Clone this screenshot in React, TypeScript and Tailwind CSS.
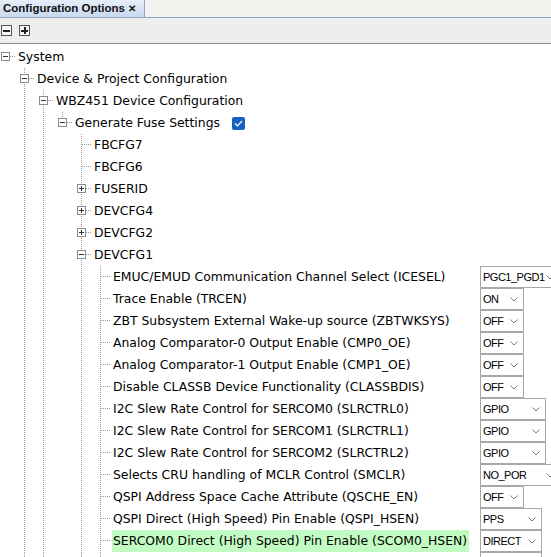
type Kind = 'open' | 'closed' | 'leaf'

type Row = {
  level: number
  label: string
  kind: Kind
  guides: boolean[]
  conn: 'root' | 'full' | 'top'
  check?: boolean
  value?: string
  width?: number
  hot?: boolean
}

const G4 = [false, true, true, false]
const G5 = [false, true, true, false, true]

const rows: Row[] = [
  { level: 0, label: 'System', kind: 'open', guides: [], conn: 'root' },
  { level: 1, label: 'Device & Project Configuration', kind: 'open', guides: [false], conn: 'full' },
  { level: 2, label: 'WBZ451 Device Configuration', kind: 'open', guides: [false, true], conn: 'full' },
  { level: 3, label: 'Generate Fuse Settings', kind: 'open', guides: [false, true, true], conn: 'top', check: true },
  { level: 4, label: 'FBCFG7', kind: 'leaf', guides: G4, conn: 'full' },
  { level: 4, label: 'FBCFG6', kind: 'leaf', guides: G4, conn: 'full' },
  { level: 4, label: 'FUSERID', kind: 'closed', guides: G4, conn: 'full' },
  { level: 4, label: 'DEVCFG4', kind: 'closed', guides: G4, conn: 'full' },
  { level: 4, label: 'DEVCFG2', kind: 'closed', guides: G4, conn: 'full' },
  { level: 4, label: 'DEVCFG1', kind: 'open', guides: G4, conn: 'full' },
  { level: 5, label: 'EMUC/EMUD Communication Channel Select (ICESEL)', kind: 'leaf', guides: G5, conn: 'full', value: 'PGC1_PGD1', width: 80 },
  { level: 5, label: 'Trace Enable (TRCEN)', kind: 'leaf', guides: G5, conn: 'full', value: 'ON', width: 44 },
  { level: 5, label: 'ZBT Subsystem External Wake-up source (ZBTWKSYS)', kind: 'leaf', guides: G5, conn: 'full', value: 'OFF', width: 44 },
  { level: 5, label: 'Analog Comparator-0 Output Enable (CMP0_OE)', kind: 'leaf', guides: G5, conn: 'full', value: 'OFF', width: 44 },
  { level: 5, label: 'Analog Comparator-1 Output Enable (CMP1_OE)', kind: 'leaf', guides: G5, conn: 'full', value: 'OFF', width: 44 },
  { level: 5, label: 'Disable CLASSB Device Functionality (CLASSBDIS)', kind: 'leaf', guides: G5, conn: 'full', value: 'OFF', width: 44 },
  { level: 5, label: 'I2C Slew Rate Control for SERCOM0 (SLRCTRL0)', kind: 'leaf', guides: G5, conn: 'full', value: 'GPIO', width: 66 },
  { level: 5, label: 'I2C Slew Rate Control for SERCOM1 (SLRCTRL1)', kind: 'leaf', guides: G5, conn: 'full', value: 'GPIO', width: 66 },
  { level: 5, label: 'I2C Slew Rate Control for SERCOM2 (SLRCTRL2)', kind: 'leaf', guides: G5, conn: 'full', value: 'GPIO', width: 66 },
  { level: 5, label: 'Selects CRU handling of MCLR Control (SMCLR)', kind: 'leaf', guides: G5, conn: 'full', value: 'NO_POR', width: 80 },
  { level: 5, label: 'QSPI Address Space Cache Attribute (QSCHE_EN)', kind: 'leaf', guides: G5, conn: 'full', value: 'OFF', width: 44 },
  { level: 5, label: 'QSPI Direct (High Speed) Pin Enable (QSPI_HSEN)', kind: 'leaf', guides: G5, conn: 'full', value: 'PPS', width: 62 },
  { level: 5, label: 'SERCOM0 Direct (High Speed) Pin Enable (SCOM0_HSEN)', kind: 'leaf', guides: G5, conn: 'full', value: 'DIRECT', width: 62, hot: true },
  // next row only peeks in at the bottom edge
  { level: 5, label: '', kind: 'leaf', guides: G5, conn: 'full', value: '', width: 62 },
]

const DOT = '#9a9a9a'

function Guide({ on }: { on: boolean }) {
  return (
    <svg width="19" height="22" className="shrink-0">
      {on && <line x1="5.5" y1="0" x2="5.5" y2="22" stroke={DOT} strokeDasharray="1 1" />}
    </svg>
  )
}

function Connector({ kind, conn }: { kind: Kind; conn: Row['conn'] }) {
  return (
    <svg width="17" height="22" className="shrink-0">
      {conn !== 'root' && (
        <line x1="5.5" y1="0" x2="5.5" y2={conn === 'full' ? 22 : 11} stroke={DOT} strokeDasharray="1 1" />
      )}
      <line x1={kind === 'leaf' ? 6 : 10} y1="10.5" x2="16" y2="10.5" stroke={DOT} strokeDasharray="1 1" />
      {kind !== 'leaf' && (
        <g>
          <rect x="1.5" y="6.5" width="8" height="8" fill="#fff" stroke="#8b8b8b" />
          <line x1="3" y1="10.5" x2="8" y2="10.5" stroke="#333" />
          {kind === 'closed' && <line x1="5.5" y1="8" x2="5.5" y2="13" stroke="#333" />}
        </g>
      )}
    </svg>
  )
}

function Combo({ value, width }: { value: string; width: number }) {
  return (
    <div
      className="h-[22px] shrink-0 border border-[#a8a8a8] bg-white flex items-center justify-between pl-[2px] pr-[5px] text-[11px] tracking-[-0.5px] text-black font-['Liberation_Sans',sans-serif]"
      style={{ width }}
    >
      <span>{value}</span>
      <svg width="8" height="5" className="shrink-0 mt-[1px]">
        <path d="M0.5 0.5 L4 4 L7.5 0.5" fill="none" stroke="#7a7a7a" />
      </svg>
    </div>
  )
}

function TreeRow({ row }: { row: Row }) {
  return (
    <div className="flex h-[22px] items-center">
      <div className="flex w-[480px] shrink-0 h-full items-center">
        {row.guides.map((g, i) => (
          <Guide key={i} on={g} />
        ))}
        <Connector kind={row.kind} conn={row.conn} />
        <span
          className={
            'h-full flex items-center whitespace-nowrap pl-[1px] pr-[2px] ' + (row.hot ? 'bg-[#c3fcc3]' : '')
          }
        >
          {row.label}
        </span>
        {row.check && (
          <span className="ml-[10px] w-[13px] h-[13px] rounded-[2px] bg-[#1662c4] flex items-center justify-center">
            <svg width="9" height="7">
              <path d="M1 3.5 L3.5 6 L8 1" fill="none" stroke="#fff" strokeWidth="1.2" />
            </svg>
          </span>
        )}
      </div>
      {row.value !== undefined && <Combo value={row.value} width={row.width ?? 60} />}
    </div>
  )
}

export default function App() {
  return (
    <div className="h-screen w-full overflow-hidden bg-white text-black">
      <div className="flex h-[18px] border-b border-[#8fa5c0] bg-[#f1f1ee]">
        <div className="w-[145px] h-full flex items-center justify-between pl-[3px] pr-[8px] bg-gradient-to-b from-[#e6eef9] to-[#c9d9ee] border-r border-[#8fa5c0] font-['Liberation_Sans',sans-serif] font-bold text-[11.5px] text-[#111]">
          <span>Configuration Options</span>
          <span className="text-[10px]">✕</span>
        </div>
      </div>
      <div className="h-[26px] bg-[#eeeeee] border-b border-[#8c8c8c] flex items-center gap-[7px] pl-[1px]">
        <div className="w-[11px] h-[11px] border border-[#555] bg-[#f7f7f7] flex items-center justify-center">
          <div className="w-[7px] h-[2px] bg-[#222]" />
        </div>
        <div className="w-[11px] h-[11px] border border-[#555] bg-[#f7f7f7] flex items-center justify-center relative">
          <div className="w-[7px] h-[2px] bg-[#222]" />
          <div className="absolute w-[2px] h-[7px] bg-[#222]" />
        </div>
      </div>
      <div className="pt-[2px] font-['DejaVu_Sans',sans-serif] text-[12.4px]">
        {rows.map((r, i) => (
          <TreeRow key={i} row={r} />
        ))}
      </div>
    </div>
  )
}
